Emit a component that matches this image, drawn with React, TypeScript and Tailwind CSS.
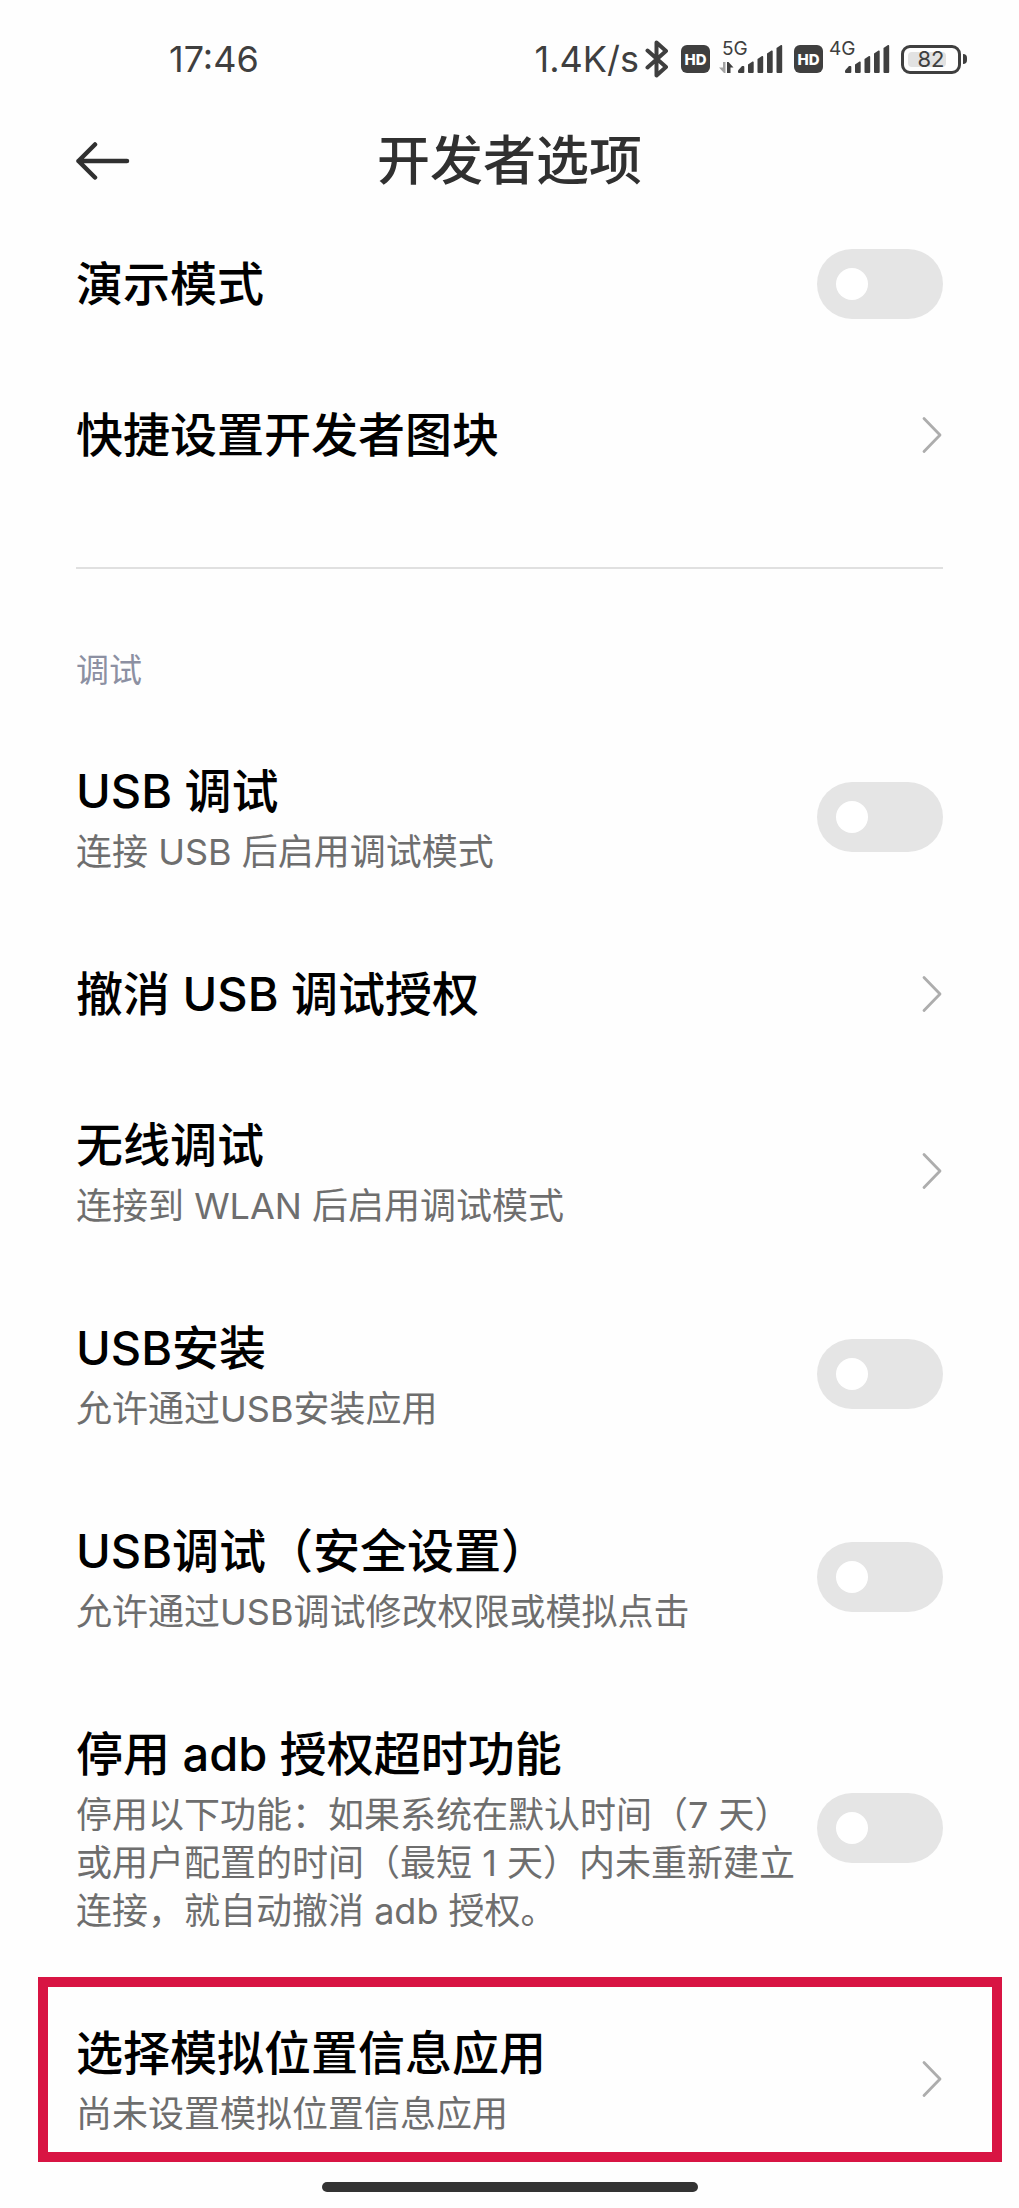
import type { ReactNode } from "react";

type Item = { id: string; title: string; summary?: string; kind: "switch" | "link"; highlighted?: boolean };

const generalItems: Item[] = [
  { id: "demo-mode", title: "演示模式", kind: "switch" },
  { id: "quick-tiles", title: "快捷设置开发者图块", kind: "link" },
];

const debugItems: Item[] = [
  { id: "usb-debug", title: "USB 调试", summary: "连接 USB 后启用调试模式", kind: "switch" },
  { id: "revoke-usb", title: "撤消 USB 调试授权", kind: "link" },
  { id: "wireless-debug", title: "无线调试", summary: "连接到 WLAN 后启用调试模式", kind: "link" },
  { id: "usb-install", title: "USB安装", summary: "允许通过USB安装应用", kind: "switch" },
  { id: "usb-secure", title: "USB调试（安全设置）", summary: "允许通过USB调试修改权限或模拟点击", kind: "switch" },
  {
    id: "adb-timeout",
    title: "停用 adb 授权超时功能",
    summary: "停用以下功能：如果系统在默认时间（7 天）或用户配置的时间（最短 1 天）内未重新建立连接，就自动撤消 adb 授权。",
    kind: "switch",
  },
  { id: "mock-location", title: "选择模拟位置信息应用", summary: "尚未设置模拟位置信息应用", kind: "link", highlighted: true },
];

function BluetoothIcon() {
  return (
    <svg width="24" height="38" viewBox="0 0 24 38" fill="none" stroke="currentColor" strokeWidth="4" strokeLinejoin="round" strokeLinecap="round" aria-label="蓝牙">
      <path d="M2.5 10.5 21 27 11.5 35.5V2.5L21 11 2.5 27.5" />
    </svg>
  );
}

function HdBadge() {
  return (
    <span className="flex h-7 w-[29px] items-center justify-center rounded-md bg-[#3f3f3f] text-[15px] leading-none font-extrabold text-white">
      HD
    </span>
  );
}

function Signal({ network, traffic }: { network: string; traffic?: boolean }) {
  return (
    <span className="relative block h-9 w-[62px]">
      <span className="absolute top-0 left-0 text-[19px] leading-4">{network}</span>
      <svg className="block overflow-visible" width="62" height="36" viewBox="0 2 62 36" fill="currentColor" aria-hidden="true">
        {traffic && (
          <>
            <path d="M1 23h2.500v11H2l-5-5.500h4z" fill="#a3a3a3" />
            <path d="M5 34V23h1.500l5 5.500H8.500V34z" />
          </>
        )}
        <path d="M16 33v-1.500l4-4.500h1.500q.8 0 .8 1v5q0 1-1 1h-4.300q-1 0-1-1z" />
        <path d="M26 25.500l4.500-3q1.200-.4 1.200 1V33q0 1-1 1H27q-1 0-1-1z" />
        <path d="M35.500 20l4.500-3q1.200-.4 1.200 1v15q0 1-1 1h-3.700q-1 0-1-1z" />
        <path d="M45 14.500l4.500-3q1.200-.4 1.200 1V33q0 1-1 1H46q-1 0-1-1z" />
        <path d="M54.500 9l4.500-3q1.200-.4 1.200 1v26q0 1-1 1h-3.700q-1 0-1-1z" />
      </svg>
    </span>
  );
}

function Battery({ level }: { level: number }) {
  return (
    <span className="flex items-center gap-0.5">
      <span className="relative flex h-[29px] w-[60px] items-center justify-center rounded-[9px] border-3 border-current">
        <span className="absolute inset-y-1 left-1 right-3 rounded-sm bg-[#e2e2e2]" />
        <span className="relative text-[22px] leading-none">{level}</span>
      </span>
      <span className="h-[10px] w-1 rounded-r-sm bg-current" />
    </span>
  );
}

function StatusBar() {
  return (
    <div className="flex h-[118px] items-center justify-between pr-[52px] pl-[169px] text-[36px] leading-none text-[#3f3f3f]">
      <time>17:46</time>
      <div className="flex items-center">
        <span>1.4K/s</span>
        <span className="ml-1.5">
          <BluetoothIcon />
        </span>
        <span className="ml-3 flex items-center gap-3">
          <HdBadge />
          <Signal network="5G" traffic />
        </span>
        <span className="ml-2.5 flex items-center gap-1.5">
          <HdBadge />
          <Signal network="4G" />
        </span>
        <span className="ml-2.5">
          <Battery level={82} />
        </span>
      </div>
    </div>
  );
}

function Header() {
  return (
    <header className="grid h-[86px] grid-cols-[53px_1fr_53px] items-center px-[76px] text-[#303030]">
      <button type="button" aria-label="返回">
        <svg width="54" height="38" viewBox="0 0 54 38" fill="none" stroke="currentColor" strokeWidth="4.500" strokeLinecap="round" strokeLinejoin="round">
          <path d="M19 2.500 2.500 19 19 35.500M2.500 19H51" />
        </svg>
      </button>
      <h1 className="text-center text-[53px] leading-[64px] font-medium">开发者选项</h1>
    </header>
  );
}

function Chevron() {
  return (
    <svg className="shrink-0" width="22" height="38" viewBox="0 0 22 38" fill="none" stroke="#adadad" strokeWidth="2.800" strokeLinecap="round" strokeLinejoin="round" aria-hidden="true">
      <path d="M3 2.500 19 19 3 35.500" />
    </svg>
  );
}

function ItemText({ item }: { item: Item }) {
  return (
    <span className="min-w-0 flex-1">
      <span className="block text-[47px] leading-[63px] font-medium text-black">{item.title}</span>
      {item.summary && <span className="mt-1.5 -mb-0.5 block text-[36px] leading-[48px] text-[#6e6e6e]">{item.summary}</span>}
    </span>
  );
}

function Row({ item }: { item: Item }) {
  const layout = "relative flex w-full items-center gap-5 px-[76px] py-11 text-left";
  if (item.kind === "switch") {
    return (
      <label htmlFor={item.id} className={layout}>
        <ItemText item={item} />
        <input
          id={item.id}
          type="checkbox"
          role="switch"
          className="-my-1 flex h-[70px] w-[126px] shrink-0 appearance-none items-center rounded-full bg-[#e5e5e5] px-[19px] before:size-8 before:rounded-full before:bg-white before:content-[''] checked:justify-end checked:bg-blue-500"
        />
      </label>
    );
  }
  return (
    <button type="button" className={layout}>
      <ItemText item={item} />
      <Chevron />
      {item.highlighted && <span className="pointer-events-none absolute top-0 right-[17px] bottom-[18px] left-[38px] border-10 border-[#d81443]" />}
    </button>
  );
}

function List({ children }: { children: ReactNode }) {
  return <ul>{children}</ul>;
}

export default function App() {
  return (
    <div className="min-h-screen bg-[#fefefe] font-['Inter','Noto_Sans_CJK_SC',sans-serif]" lang="zh-CN">
      <StatusBar />
      <Header />
      <main className="pt-1">
        <List>
          {generalItems.map((item) => (
            <li key={item.id}>
              <Row item={item} />
            </li>
          ))}
        </List>
        <hr className="mx-[76px] mt-[57px] border-t-2 border-[#e0e0e0]" />
        <h2 className="px-[76px] pt-[76px] pb-5 text-[33px] leading-[50px] text-[#8c90a2]">调试</h2>
        <List>
          {debugItems.map((item) => (
            <li key={item.id}>
              <Row item={item} />
            </li>
          ))}
        </List>
      </main>
      <div className="mx-auto mt-0.5 h-2.5 w-[376px] rounded-full bg-[#333333]" />
    </div>
  );
}
